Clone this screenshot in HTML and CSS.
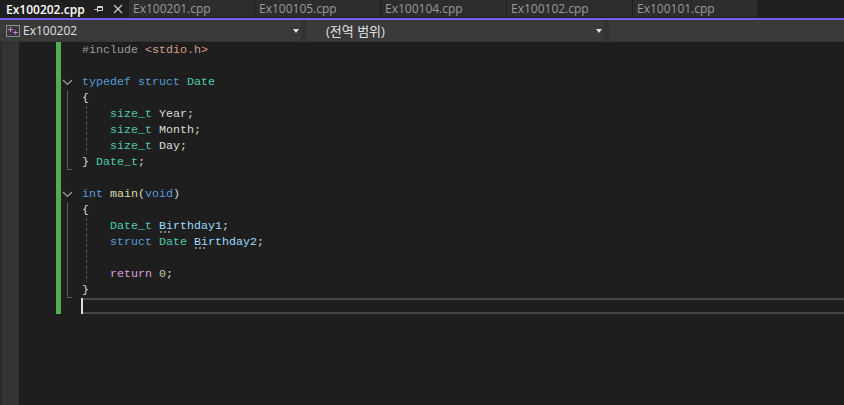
FILE: index.html
```html
<!DOCTYPE html>
<html lang="ko">
<head>
<meta charset="utf-8">
<title>Ex100202.cpp</title>
<link rel="stylesheet" href="styles.css">
</head>
<body>
<div class="tabs">
  <div class="tab active"><span class="tab-name">Ex100202.cpp</span>
    <svg class="tab-icon pin" width="10" height="10" viewBox="0 0 10 10"><path d="M0.5 5.5H3M3.5 2.5V8M3.5 2.5H8.5V6.5H3.5M3.5 3.5H8.5" fill="none" stroke="#d0d0d0" stroke-width="1"/></svg>
    <svg class="tab-icon close" width="10" height="10" viewBox="0 0 10 10"><path d="M1 1L9 9M9 1L1 9" fill="none" stroke="#c8c8c8" stroke-width="1.2"/></svg>
  </div>
  <div class="tab"><span class="tab-name">Ex100201.cpp</span></div>
  <div class="tab"><span class="tab-name">Ex100105.cpp</span></div>
  <div class="tab"><span class="tab-name">Ex100104.cpp</span></div>
  <div class="tab"><span class="tab-name">Ex100102.cpp</span></div>
  <div class="tab"><span class="tab-name">Ex100101.cpp</span></div>
</div>
<div class="navbar">
  <div class="nav-cell nav-project">
    <svg class="nav-icon" width="14" height="12" viewBox="0 0 14 12"><rect x="0.5" y="0.5" width="13" height="11" fill="none" stroke="#8c8c8c"/><path d="M2 4.5H7M4.5 2V7" fill="none" stroke="#c27bdc" stroke-width="1"/><path d="M7 7.5H12M9.5 5.5V9.5" fill="none" stroke="#c27bdc" stroke-width="1"/></svg>
    <span class="nav-text">Ex100202</span>
    <span class="caret-down"></span>
  </div>
  <div class="nav-cell nav-scope">
    <span class="nav-text scope-text">(전역 범위)</span>
    <span class="caret-down"></span>
  </div>
  <div class="nav-cell nav-rest"></div>
</div>
<div class="editor">
  <div class="glyph-margin"></div>
  <div class="code">
    <div class="row"><div class="fold"></div><div class="line"><span class="pp">#include</span> <span class="str">&lt;stdio.h&gt;</span></div></div>
    <div class="row"><div class="fold"></div><div class="line"></div></div>
    <div class="row"><div class="fold"><svg class="chev" width="11" height="7" viewBox="0 0 11 7"><path d="M1 1L5.5 5.5L10 1" fill="none" stroke="#a0a0a0" stroke-width="1.2"/></svg></div><div class="line first"><span class="kw">typedef</span> <span class="kw">struct</span> <span class="ty">Date</span></div></div>
    <div class="row"><div class="fold bar"></div><div class="line"><span class="tx">{</span></div></div>
    <div class="row"><div class="fold bar"></div><div class="line guide">    <span class="ty">size_t</span> <span class="tx">Year;</span></div></div>
    <div class="row"><div class="fold bar"></div><div class="line guide">    <span class="ty">size_t</span> <span class="tx">Month;</span></div></div>
    <div class="row"><div class="fold bar"></div><div class="line guide">    <span class="ty">size_t</span> <span class="tx">Day;</span></div></div>
    <div class="row"><div class="fold bar end"></div><div class="line"><span class="tx">}</span> <span class="ty">Date_t</span><span class="tx">;</span></div></div>
    <div class="row"><div class="fold"></div><div class="line"></div></div>
    <div class="row"><div class="fold"><svg class="chev" width="11" height="7" viewBox="0 0 11 7"><path d="M1 1L5.5 5.5L10 1" fill="none" stroke="#a0a0a0" stroke-width="1.2"/></svg></div><div class="line"><span class="kw">int</span> <span class="fn">main</span><span class="tx">(</span><span class="kw">void</span><span class="tx">)</span></div></div>
    <div class="row"><div class="fold bar"></div><div class="line"><span class="tx">{</span></div></div>
    <div class="row"><div class="fold bar"></div><div class="line guide">    <span class="ty">Date_t</span> <span class="var hint">Birthday1</span><span class="tx">;</span></div></div>
    <div class="row"><div class="fold bar"></div><div class="line guide">    <span class="kw">struct</span> <span class="ty">Date</span> <span class="var hint">Birthday2</span><span class="tx">;</span></div></div>
    <div class="row"><div class="fold bar"></div><div class="line guide"></div></div>
    <div class="row"><div class="fold bar"></div><div class="line guide">    <span class="ctl">return</span> <span class="num">0</span><span class="tx">;</span></div></div>
    <div class="row"><div class="fold bar end"></div><div class="line"><span class="tx">}</span></div></div>
    <div class="row current"><div class="fold"></div><div class="line"><span class="cursor"></span></div></div>
  </div>
</div>
</body>
</html>
```
FILE: styles.css
```css
* { box-sizing: border-box; }
html, body { margin: 0; height: 100%; }
body {
  width: 844px;
  height: 405px;
  overflow: hidden;
  background: #1e1e1e;
  display: flex;
  flex-direction: column;
  font-family: "Open Sans", "Noto Sans CJK KR", sans-serif;
}
.tabs {
  display: flex;
  height: 20px;
  flex: none;
  background: #1f1f1f;
  border-bottom: 2px solid #7160e8;
}
.tab {
  width: 126px;
  height: 17px;
  flex: none;
  display: flex;
  align-items: center;
  padding-left: 4px;
  background: #2d2d2d;
  border-left: 1px solid #1f1f1f;
  color: #9a9a9a;
  font-size: 12px;
  white-space: nowrap;
}
.tab:last-child { width: 125px; }
.tab.active {
  width: 128px;
  height: 18px;
  padding-left: 6px;
  background: #1f1f1f;
  border-left: 0;
  color: #fff;
  font-weight: 600;
}
.tab-icon { flex: none; }
.pin { margin-left: 9px; }
.close { margin-left: 9px; }
.navbar {
  display: flex;
  height: 22px;
  flex: none;
  background: #3a3a3a;
  border-bottom: 1px solid #333;
  color: #e0e0e0;
  font-size: 12px;
}
.nav-cell {
  display: flex;
  align-items: center;
  border-right: 5px solid #333;
}
.nav-project { width: 306px; padding-left: 6px; }
.nav-scope { width: 303px; padding-left: 20px; }
.nav-rest { flex: 1; border-right: 0; }
.nav-icon { margin-right: 3px; flex: none; }
.nav-text { flex: 1; }
.scope-text { font-size: 13px; }
.caret-down {
  width: 0;
  height: 0;
  margin-right: 2px;
  border-left: 3.5px solid transparent;
  border-right: 3.5px solid transparent;
  border-top: 4px solid #e0e0e0;
}
.editor { flex: 1; display: flex; }
.glyph-margin {
  width: 19px;
  flex: none;
  background: #333;
  border-left: 2px solid #2a2a2a;
}
.code {
  flex: 1;
  padding-left: 37px;
  font-family: "Liberation Mono", monospace;
  font-size: 11.67px;
  color: #dcdcdc;
}
.row { display: flex; height: 16px; border-left: 5px solid #4fae4f; line-height: 17px; }
.fold { width: 20px; flex: none; position: relative; }
.fold.bar::before {
  content: "";
  position: absolute;
  left: 6px;
  top: 0;
  bottom: 0;
  width: 1px;
  background: #5a5a5a;
}
.fold.end::after {
  content: "";
  position: absolute;
  left: 6px;
  bottom: 0;
  width: 5px;
  height: 1px;
  background: #5a5a5a;
}
.chev { position: absolute; left: 1px; top: 5px; }
.line { flex: 1; white-space: pre; position: relative; padding-left: 1px; }
.line.guide::before {
  content: "";
  position: absolute;
  left: 5px;
  top: 0;
  bottom: 0;
  width: 1px;
  background: repeating-linear-gradient(180deg, #5a5a5a 0 3px, transparent 3px 5px);
}
.row.current .line {
  border-top: 2px solid #464646;
  border-bottom: 2px solid #464646;
}
.cursor {
  position: absolute;
  left: 0;
  top: -2px;
  width: 2px;
  height: 16px;
  background: #dcdcdc;
}
.kw { color: #569cd6; }
.ty { color: #4ec9b0; }
.fn { color: #dcdcaa; }
.pp { color: #9b9b9b; }
.str { color: #d69d85; }
.tx { color: #dcdcdc; }
.var { color: #9cdcfe; }
.ctl { color: #d8a0df; }
.num { color: #b5cea8; }
.hint {
  background-image: repeating-linear-gradient(90deg, #808080 0 2px, transparent 2px 4px);
  background-size: 10px 2px;
  background-repeat: no-repeat;
  background-position: 1px 100%;
}
```
